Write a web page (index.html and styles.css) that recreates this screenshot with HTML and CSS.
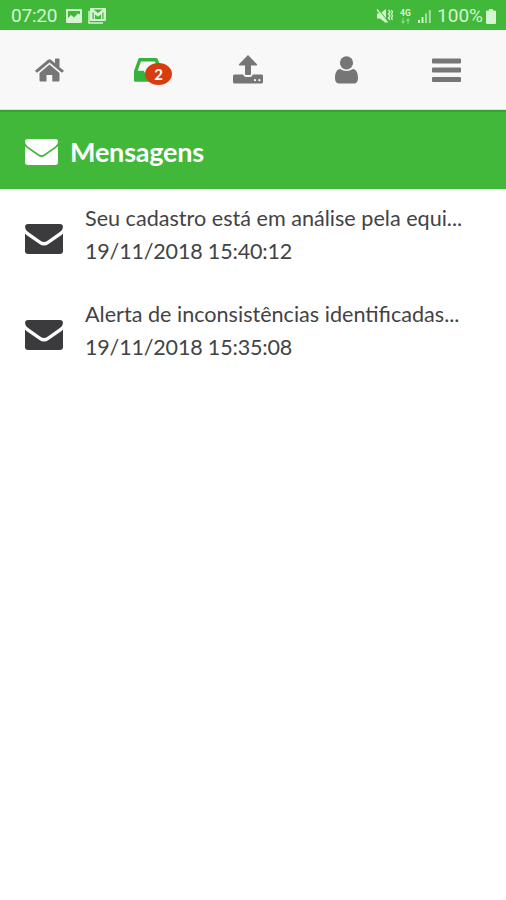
FILE: index.html
```
<!DOCTYPE html>
<html lang="pt-BR">
<head>
<meta charset="utf-8">
<title>Mensagens</title>
<link rel="stylesheet" href="styles.css">
</head>
<body>
<div class="status">
  <span class="clock">07:20</span>
  <svg class="s-photo" width="16" height="14" viewBox="0 0 16 14"><path fill-rule="evenodd" d="M1 0h14a1 1 0 0 1 1 1v12a1 1 0 0 1-1 1H1a1 1 0 0 1-1-1V1a1 1 0 0 1 1-1zM2 2v7l3-3 3 2.500 4-4 2 1V2z"/></svg>
  <svg class="s-mail" width="18" height="16" viewBox="0 0 18 16"><path d="M1 3v12h14" fill="none" stroke="currentColor" stroke-width="1.500"/><path fill-rule="evenodd" d="M3 0h14a1 1 0 0 1 1 1v11a1 1 0 0 1-1 1H3a1 1 0 0 1-1-1V1a1 1 0 0 1 1-1zM5.500 1.500L10 5l4.500-3.500zM4.500 4v7h1.300V5zM15.500 4v7h-1.300V5zM7 6.500V11h6V6.500l-3 2.300z"/></svg>
  <span class="spacer"></span>
  <svg class="s-mute" width="17" height="17" viewBox="0 0 17 17"><path d="M1 5.500h3L10 1v14l-6-4.500H1z"/><path d="M2.200 1l10 13" fill="none" stroke="#41b83a" stroke-width="1.200"/><path d="M1 1.500l10.500 13M12.500 2l1.500 2-1.500 2 1.500 2-1.500 2 1.500 2M15.500 2l1 2-1 2 1 2-1 2 1 2" fill="none" stroke="currentColor" stroke-width="1.300"/></svg>
  <span class="network"><b>4G</b><svg width="9" height="6" viewBox="0 0 9 6"><path opacity=".55" d="M1.500 0h1v3H4L2 6 0 3h1.500zM6.500 6h1V3H9L7 0 5 3h1.500z"/></svg></span>
  <svg class="s-signal" width="13" height="13" viewBox="0 0 13 13"><path d="M0 10h2v3H0zM3.500 7h2v6h-2z"/><path opacity=".65" d="M7 3.500h2V13H7zM10.800 0h2v13h-2z"/></svg>
  <span class="percent">100%</span>
  <svg width="10" height="15" viewBox="0 0 10 15"><path d="M3 0h4v1.500h2a1 1 0 0 1 1 1V14a1 1 0 0 1-1 1H1a1 1 0 0 1-1-1V2.500a1 1 0 0 1 1-1h2z"/></svg>
</div>
<nav class="nav">
  <a class="tab"><svg width="29" height="24" viewBox="0 0 29 24"><path d="M14.500 6.500L4.500 15v7.500q0 1 1 1h6v-6.500h5.800v6.500h6.200q1 0 1-1V15z"/><path d="M24.500 9.200V1.200q0-.7-.7-.7h-3.100q-.7 0-.7.700v4L16.300 2.100q-1.800-1.500-3.600 0L.5 12.200q-.5.500-.1 1l1 1.100q.5.500 1 .1L14.500 4.600l12.100 9.800q.5.400 1-.1l1-1.100q.4-.5-.1-1z"/></svg></a>
  <a class="tab active"><svg class="inbox" width="28" height="24" viewBox="0 0 28 24"><path fill-rule="evenodd" d="M6 0h16q1.300 0 1.800 1.300L28 13v9.500q0 1.200-1.200 1.200H1.200Q0 23.700 0 22.500V13L4.200 1.300Q4.700 0 6 0zM7 3.500L3.700 12.800h6l2 3.400h5.100l2-3.400h5.500L21 3.500z"/></svg><span class="badge">2</span></a>
  <a class="tab"><svg class="upload" width="30" height="29" viewBox="0 0 30 29"><path d="M15 0l8.800 9q1 1.300-.7 1.500H18V19q0 1-1 1h-4q-1 0-1-1v-8.500H7q-1.800-.2-.8-1.500z"/><path fill-rule="evenodd" d="M1.500 19.500h8.600Q11.200 22 13.300 22h3.400q2.100 0 3.200-2.500h8.600q1.500 0 1.500 1.500v6q0 1.500-1.500 1.500h-27Q0 28.500 0 27v-6q0-1.500 1.500-1.500zM22 24.100a1.100 1.100 0 1 0 0 2.200 1.100 1.100 0 0 0 0-2.200zm4.400 0a1.100 1.100 0 1 0 0 2.200 1.100 1.100 0 0 0 0-2.200z"/></svg></a>
  <a class="tab"><svg class="user" width="23" height="28" viewBox="0 0 23 28"><circle cx="11.500" cy="6.800" r="6.600"/><path d="M5 13Q8 15 11.500 15T18 13C21.500 13.500 23 17 23 22.500 23 25.500 21.300 27.500 19 27.500H4C1.700 27.500 0 25.500 0 22.500 0 17 1.500 13.500 5 13z"/></svg></a>
  <a class="tab"><svg width="29" height="24" viewBox="0 0 29 24"><rect width="29" height="5" y=".5" rx="1"/><rect width="29" height="5" y="9.500" rx="1"/><rect width="29" height="5" y="19" rx="1"/></svg></a>
</nav>
<header class="title">
  <svg width="33" height="26" viewBox="0 0 38 30" preserveAspectRatio="none"><path d="M3.500 0h31Q38 0 38 3.200 38 6 34.800 8.600L22 17.500Q19 19.500 16 17.500L3.200 8.600Q0 6 0 3.200 0 0 3.500 0z"/><path d="M0 8.500q.8 1 2.300 2L15 19.300q4 2.800 8 0L35.700 10.500q1.500-1 2.300-2v18Q38 30 34.600 30H3.400Q0 30 0 26.500z"/></svg>
  <h1>Mensagens</h1>
</header>
<main class="list">
  <article class="item">
    <svg width="38" height="30" viewBox="0 0 38 30"><path d="M3.200 0h31.600Q38 0 38 3 38 5.700 34.800 8L22.500 16.800Q19 19.200 15.500 16.800L3.200 8Q0 5.700 0 3 0 0 3.200 0z"/><path d="M0 9.500q.8.900 2.200 1.900L14.500 20q4.500 3 9 0L35.800 11.400Q37.200 10.400 38 9.500v17.200Q38 30 34.800 30H3.200Q0 30 0 26.700z"/></svg>
    <div class="body"><p class="subject">Seu cadastro está em análise pela equi...</p><p class="date">19/11/2018 15:40:12</p></div>
  </article>
  <article class="item">
    <svg width="38" height="30" viewBox="0 0 38 30"><path d="M3.200 0h31.600Q38 0 38 3 38 5.700 34.800 8L22.500 16.800Q19 19.200 15.500 16.800L3.200 8Q0 5.700 0 3 0 0 3.200 0z"/><path d="M0 9.500q.8.900 2.200 1.900L14.500 20q4.500 3 9 0L35.800 11.400Q37.200 10.400 38 9.500v17.200Q38 30 34.800 30H3.200Q0 30 0 26.700z"/></svg>
    <div class="body"><p class="subject">Alerta de inconsistências identificadas...</p><p class="date">19/11/2018 15:35:08</p></div>
  </article>
</main>
</body>
</html>
```
FILE: styles.css
```
* { box-sizing: border-box; }
body { margin: 0; background: #fff; color: #3b3b3d; font-family: Lato, sans-serif; }
h1, p { margin: 0; }
svg { display: block; flex: none; fill: currentColor; }

.status { display: flex; align-items: center; height: 30px; padding: 2px 10px 0 11px; background: #41b83a; color: #d5f4d1; font: 19px/28px Roboto, sans-serif; }
.clock { width: 55px; letter-spacing: -.2px; }
.s-mail { margin-left: 6px; }
.spacer { flex: 1; }
.network { width: 13px; margin: 0 5px 0 7px; }
.network b { display: block; font-size: 8.500px; line-height: 9px; }
.network svg { margin-left: 1px; }
.percent { margin: 0 3px 0 6px; }

.nav { display: flex; height: 80px; padding-right: 10px; background: #f8f8f8; color: #767676; border-bottom: 1px solid #dfe3df; }
.tab { position: relative; display: flex; flex: 1; align-items: center; justify-content: center; }
.active { color: #35b43a; }
.inbox, .user { margin-right: 2px; }
.badge { position: absolute; left: 46px; top: 33px; width: 27px; height: 22px; border-radius: 50%; background: #d63e10; color: #fff; font-size: 15px; font-weight: 700; line-height: 22px; text-align: center; }

.title { display: flex; align-items: center; height: 79px; padding: 3px 25px 0; border-top: 2px solid #38a333; background: #41b83a; color: #fff; }
.title h1 { margin-left: 12px; font-size: 27px; line-height: 34px; font-weight: 700; letter-spacing: -.2px; }

.list { padding: 13px 25px; }
.item { display: flex; height: 96px; }
.item > svg { margin: 22px 22px 0 0; }
.body { font-size: 21.600px; line-height: 32.500px; white-space: nowrap; color: #434345; }
.date { font-size: 21.500px; letter-spacing: -.17px; }
```
